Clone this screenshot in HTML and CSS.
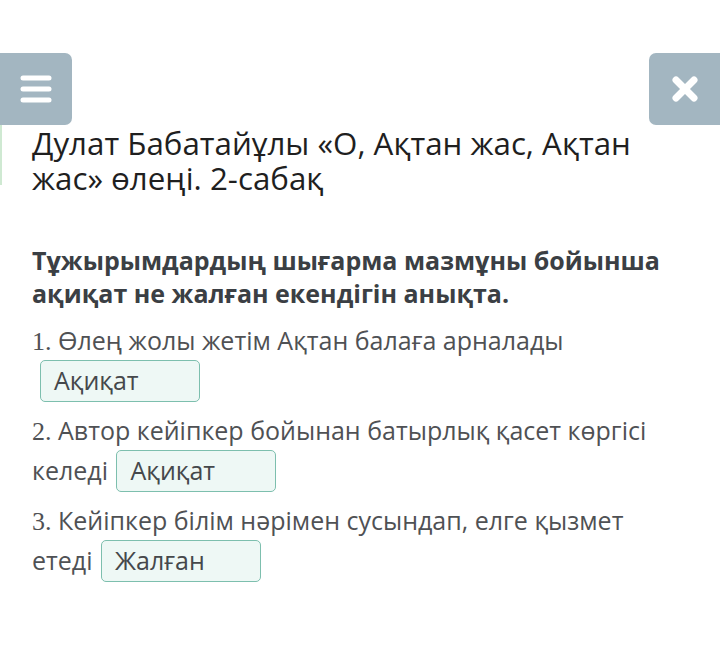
FILE: index.html
```html
<!DOCTYPE html>
<html lang="kk">
<head>
<meta charset="utf-8">
<link rel="stylesheet" href="styles.css">
</head>
<body>
<div class="page">
  <div class="topbar">
    <div class="btn btn-menu">
      <svg width="34" height="30" viewBox="0 0 34 30"><g stroke="#fff" stroke-width="5" stroke-linecap="round"><line x1="4" y1="4" x2="30" y2="4"/><line x1="4" y1="15" x2="30" y2="15"/><line x1="4" y1="26" x2="30" y2="26"/></g></svg>
    </div>
    <div class="btn btn-close">
      <svg width="28" height="28" viewBox="0 0 28 28"><g stroke="#fff" stroke-width="7" stroke-linecap="round"><line x1="5" y1="5" x2="23" y2="23"/><line x1="23" y1="5" x2="5" y2="23"/></g></svg>
    </div>
  </div>
  <h1 class="title">Дулат Бабатайұлы «О, Ақтан жас, Ақтан жас» өлеңі. 2-сабақ</h1>
  <p class="question">Тұжырымдардың шығарма мазмұны бойынша ақиқат не жалған екендігін анықта.</p>
  <p class="item"><span class="num">1.</span> Өлең жолы жетім Ақтан балаға арналады <span class="answer first">Ақиқат</span></p>
  <p class="item"><span class="num">2.</span> Автор кейіпкер бойынан батырлық қасет көргісі келеді <span class="answer">Ақиқат</span></p>
  <p class="item"><span class="num">3.</span> Кейіпкер білім нәрімен сусындап, елге қызмет етеді <span class="answer">Жалған</span></p>
</div>
</body>
</html>
```
FILE: styles.css
```css
html, body {
  margin: 0;
  padding: 0;
  background: #fff;
}
body {
  font-family: "Open Sans", "Noto Sans", sans-serif;
  width: 720px;
  height: 662px;
  overflow: hidden;
}
.page {
  position: relative;
  padding-top: 53px;
}
.page::before {
  content: "";
  position: absolute;
  left: 0;
  top: 125px;
  width: 2px;
  height: 60px;
  background: #cfe9d2;
}
.topbar {
  display: flex;
  justify-content: space-between;
  height: 72px;
}
.btn {
  width: 72px;
  height: 72px;
  background: #a3b6c1;
  display: flex;
  align-items: center;
  justify-content: center;
}
.btn-menu {
  border-radius: 0 7px 7px 0;
}
.btn-close {
  width: 71px;
  border-radius: 7px 0 0 7px;
}
.title {
  margin: 1px 40px 0 32px;
  font-size: 31.3px;
  font-weight: 400;
  line-height: 35px;
  color: #1f1f1f;
}
.question {
  margin: 48px 40px 0 32px;
  font-size: 25px;
  font-weight: 700;
  line-height: 33px;
  color: #3b3f44;
}
.item {
  margin: 11px 40px 0 32px;
  font-size: 25px;
  line-height: 38px;
  color: #4f5154;
}
.item + .item {
  margin-top: 12px;
}
.num {
  font-family: "Liberation Serif", "DejaVu Serif", serif;
  font-size: 26px;
}
.answer {
  display: inline-block;
  box-sizing: border-box;
  width: 160px;
  height: 42px;
  line-height: 38px;
  margin: -2px 0 -3px 2px;
  padding-left: 13px;
  vertical-align: baseline;
  border: 1.5px solid #7dbfae;
  border-radius: 5px;
  background: #eef8f5;
  color: #45484b;
}
.answer.first {
  margin-left: 8px;
}
```
